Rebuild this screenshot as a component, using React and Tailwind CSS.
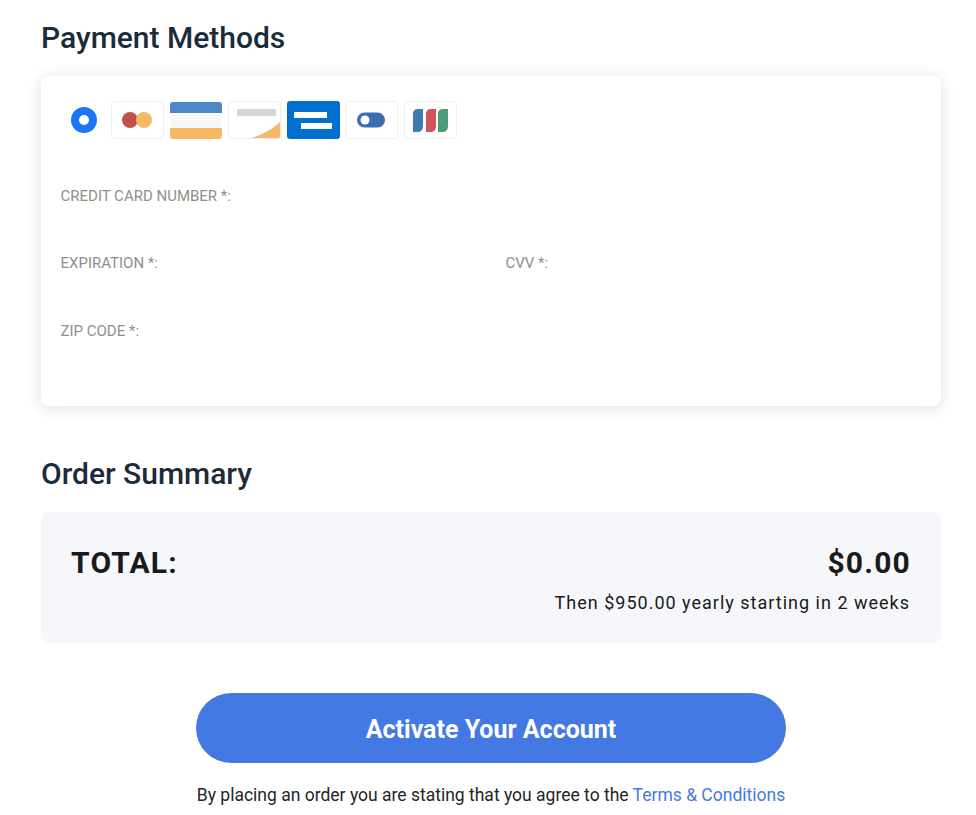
import React from 'react';

const cardBox = 'w-[52.5px] h-[38px] rounded-[3px] border border-[#efefef] bg-white overflow-hidden flex items-center justify-center';

const PaymentIcons = () => (
  <div className="flex items-center gap-[6.2px]">
    {/* mastercard */}
    <div className={cardBox}>
      <svg width="32" height="18" viewBox="0 0 32 18">
        <circle cx="9" cy="9" r="8" fill="#c0514d" />
        <circle cx="23" cy="9" r="8" fill="#f6b766" />
      </svg>
    </div>
    {/* visa */}
    <div className="w-[52.5px] h-[37px] rounded-[3px] overflow-hidden flex flex-col">
      <div className="h-[11px] bg-[#4f86c6]" />
      <div className="flex-1 bg-[#f8f8f8]" />
      <div className="h-[11px] bg-[#f6b766]" />
    </div>
    {/* discover */}
    <div className={cardBox}>
      <svg width="50" height="36" viewBox="0 0 50 36">
        <rect x="7" y="7" width="39" height="7" fill="#d6d6d6" />
        <path d="M21 36 C33 33 44 26 51 19 L51 36 Z" fill="#f6b766" />
      </svg>
    </div>
    {/* amex */}
    <div className="w-[52.5px] h-[38px] rounded-[3px] bg-[#006fcf] flex items-center justify-center">
      <svg width="52" height="38" viewBox="0 0 52 38">
        <rect x="7" y="11" width="33" height="6" fill="#fff" />
        <rect x="14" y="22" width="31" height="6" fill="#fff" />
      </svg>
    </div>
    {/* diners */}
    <div className={cardBox}>
      <svg width="30" height="16" viewBox="0 0 30 16">
        <rect x="0" y="0.5" width="28" height="15" rx="7.5" fill="#3a6cb0" />
        <circle cx="8" cy="8" r="4.5" fill="#fff" />
      </svg>
    </div>
    {/* jcb */}
    <div className={cardBox}>
      <svg width="36" height="23" viewBox="0 0 36 23">
        <path d="M5 0 H10 V17 Q10 23 4 23 H0 V5 Q0 0 5 0 Z" fill="#4179ae" />
        <path d="M18 0 H23 V17 Q23 23 17 23 H13 V5 Q13 0 18 0 Z" fill="#d0545b" />
        <path d="M30 0 H35 V17 Q35 23 29 23 H25 V5 Q25 0 30 0 Z" fill="#4b9a78" />
      </svg>
    </div>
  </div>
);

export default function App() {
  return (
    <div className="w-[976px] h-[815px] overflow-hidden bg-white pl-[41px] pr-[35px] font-['Roboto',sans-serif]">
      <h2 className="pt-[20px] text-[30px] leading-[36px] font-medium text-[#1c2b3a]">Payment Methods</h2>

      <div className="mt-[20px] h-[330px] rounded-lg bg-white pl-[19.5px] pr-5 pt-[25px] shadow-[0_2px_14px_rgba(40,60,90,0.16)]">
        <div className="flex items-center gap-[14px] pl-[10.5px]">
          <span className="w-[26px] h-[26px] rounded-full bg-[#1a76f2] flex items-center justify-center">
            <span className="w-[10px] h-[10px] rounded-full bg-white" />
          </span>
          <PaymentIcons />
        </div>

        <div className="mt-[47px] text-[15px] leading-5 text-[#8f8f8a]">CREDIT CARD NUMBER *:</div>
        <div className="mt-[47px] grid grid-cols-[445px_1fr] text-[15px] leading-5 text-[#8f8f8a]">
          <div>EXPIRATION *:</div>
          <div>CVV *:</div>
        </div>
        <div className="mt-[48px] text-[15px] leading-5 text-[#8f8f8a]">ZIP CODE *:</div>
      </div>

      <h2 className="mt-[50px] text-[30px] leading-[36px] font-medium text-[#1c2b3a]">Order Summary</h2>

      <div className="mt-[20px] h-[131px] rounded-lg bg-[#f6f7fb] px-[30px] pt-[31px] text-[#1a1a1a]">
        <div className="flex justify-between text-[30px] leading-[40px] font-bold tracking-[1.2px]">
          <span>TOTAL:</span>
          <span>$0.00</span>
        </div>
        <div className="mt-[8px] pr-px text-right text-[18px] leading-6 tracking-[1px]">Then $950.00 yearly starting in 2 weeks</div>
      </div>

      <div className="mt-[50px] flex justify-center">
        <button className="w-[590px] h-[70px] rounded-full bg-[#4479e4] pt-[3px] text-white text-[25px] font-bold">
          Activate Your Account
        </button>
      </div>

      <p className="mt-[19px] text-center text-[17.5px] leading-[26px] text-[#252525]">
        By placing an order you are stating that you agree to the <span className="text-[#4479e4]">Terms &amp; Conditions</span>
      </p>
    </div>
  );
}
